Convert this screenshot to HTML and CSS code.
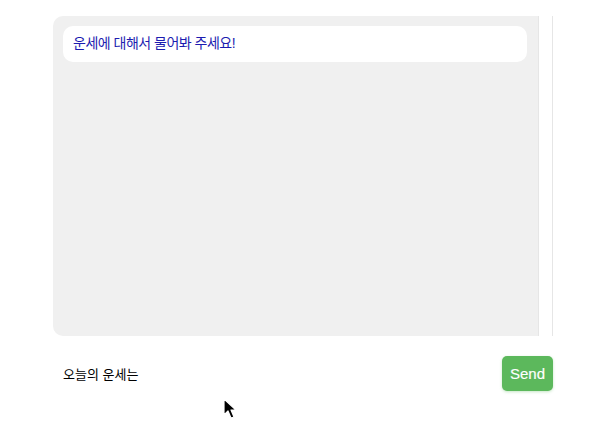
FILE: index.html
```html
<!DOCTYPE html>
<html lang="ko">
<head>
<meta charset="utf-8">
<title>운세</title>
<link rel="stylesheet" href="styles.css">
</head>
<body>
<div class="app">
  <div class="chat">
    <div class="messages">
      <div class="bubble">운세에 대해서 물어봐 주세요!</div>
    </div>
    <div class="scrollbar"></div>
  </div>
  <form class="composer" onsubmit="return false">
    <input class="field" type="text" value="오늘의 운세는">
    <button class="send" type="submit">Send</button>
  </form>
</div>
<svg class="cursor" width="14" height="22" viewBox="0 0 14 22">
  <path d="M1 1 L1 17 L5 13 L8 20 L11 19 L8 12 L13 12 Z" fill="#000" stroke="#fff" stroke-width="1.2" stroke-linejoin="round"/>
</svg>
</body>
</html>
```

FILE: styles.css
```css
* { box-sizing: border-box; }
html, body { margin: 0; padding: 0; background: #fff; }
body {
  font-family: "Liberation Sans", "Noto Sans CJK KR", sans-serif;
  font-size: 14px;
  position: relative;
  width: 606px;
  height: 432px;
  overflow: hidden;
}
.app {
  width: 500px;
  margin: 16px auto 0;
}
.chat {
  display: flex;
  height: 320px;
  background: #f0f0f0;
  border-radius: 10px 0 0 10px;
  overflow: hidden;
}
.messages {
  flex: 1;
  padding: 10px 11px 10px 10px;
}
.bubble {
  background: #fff;
  border-radius: 10px;
  padding: 7px 10px 9px;
  line-height: 20px;
  color: #1c1cb0;
  font-size: 14px;
  letter-spacing: -0.5px;
}
.scrollbar {
  width: 15px;
  background: #fff;
  border-left: 1px solid #e6e6e6;
  border-right: 1px solid #e6e6e6;
}
.composer {
  display: flex;
  align-items: center;
  justify-content: space-between;
  margin: 20px 0 0;
}
.field {
  flex: 1;
  border: none;
  outline: none;
  background: transparent;
  font: inherit;
  font-size: 13px;
  color: #000;
  padding: 0 10px;
  height: 35px;
}
.send {
  width: 51px;
  height: 35px;
  background: #5cb85c;
  color: #fff;
  border: none;
  border-radius: 5px;
  font-family: "Liberation Sans", sans-serif;
  font-size: 15px;
  font-weight: normal;
  -webkit-text-stroke: 0.15px #fff;
  padding: 0;
  box-shadow: 0 1px 3px rgba(92, 184, 92, 0.35);
}
.cursor {
  position: absolute;
  left: 223px;
  top: 398px;
}
```
